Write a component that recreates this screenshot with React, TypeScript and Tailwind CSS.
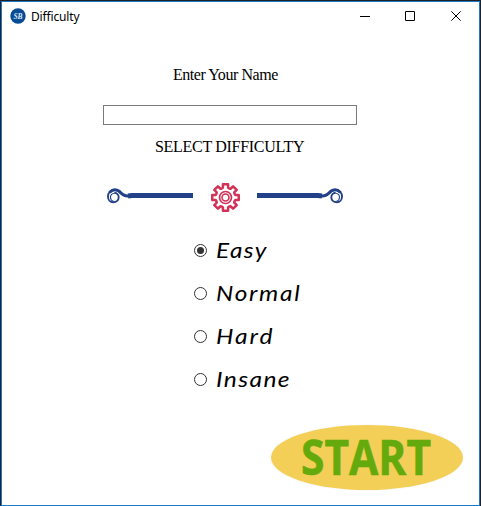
import { useState } from 'react';

const levels = [
  { name: 'Easy', look: 'tracking-[1.2px] scale-x-[1.16]' },
  { name: 'Normal', look: 'tracking-[1.5px] scale-x-[1.16]' },
  { name: 'Hard', look: 'tracking-[1.7px] scale-x-[1.17]' },
  { name: 'Insane', look: 'tracking-[1.2px] scale-x-[1.17]' },
];

function TitleBar() {
  return (
    <header className="mb-px flex h-7 items-center pl-2">
      <svg width="16" height="16" viewBox="0 0 16 16">
        <circle cx="8" cy="8" r="7.7" fill="#064b93" />
        <text x="8" y="10.6" textAnchor="middle" fontFamily="Liberation Serif, serif" fontSize="7.5" fontWeight="700" fontStyle="italic" fill="#dbe9f7">SB</text>
      </svg>
      <h1 className="mt-0.5 ml-[5px] grow font-['Noto_Sans',sans-serif] text-[12px] leading-4 tracking-[-0.15px]">Difficulty</h1>
      <div className="flex">
        {['M1 5.5H11', 'M.5 .5H9.5V9.5H.5Z', 'M.3 .3L9.7 9.7M9.7 .3L.3 9.7'].map((d) => (
          <button key={d} className="flex h-7 w-[46px] items-center justify-center">
            <svg width="10" height="10" viewBox="0 0 10 10" fill="none" stroke="#000" className="overflow-visible">
              <path d={d} />
            </svg>
          </button>
        ))}
      </div>
    </header>
  );
}

function Divider() {
  const cog: string[] = [];
  for (let i = 0; i < 8; i++) {
    const pts = [[-22.5, 9.8], [-15, 10.1], [-11, 13.5], [11, 13.5], [15, 10.1]];
    pts.forEach(([a, r]) => {
      const t = ((i * 45 + a) * Math.PI) / 180;
      cog.push(`${(r * Math.sin(t)).toFixed(2)},${(-r * Math.cos(t)).toFixed(2)}`);
    });
  }
  const scroll = (
    <g fill="none" stroke="#234189">
      <path d="M87 12.5H26L22 13" strokeWidth="5" />
      <path d="M28 13H20C15 13 14.5 7 9 7C4.5 7 2 10 2 13.5C2 16.8 4.2 19.3 7.2 19.3C10.4 19.3 12.7 17 12.7 14.3C12.7 12 10.8 10 8.3 9.8" strokeWidth="1.9" />
      <path d="M3.5 9.5Q8 4.8 13.3 8.3Q17 12.8 21 13H28" strokeWidth="3" />
      <path d="M8.5 10.3C5.8 10.4 4.3 12.3 4.5 14.5C4.6 16.5 6 18 7.5 18.4" strokeWidth="1.1" />
    </g>
  );
  return (
    <svg width="238" height="30" viewBox="0 0 238 30" className="mt-[27px] ml-[104px]">
      {scroll}
      <g transform="translate(238 0) scale(-1 1)">{scroll}</g>
      <g transform="translate(119.5 14.5)" fill="none" stroke="#d33157">
        <polygon points={cog.join(' ')} strokeWidth="2.5" strokeLinejoin="round" />
        <circle r="6" strokeWidth="1.7" />
        <circle r="3.5" strokeWidth="1.6" />
      </g>
    </svg>
  );
}

export default function App() {
  const [level, setLevel] = useState('Easy');
  return (
    <div className="h-[506px] w-[481px] border-x border-t border-[#202027] bg-white text-black">
      <main className="flex h-[505px] flex-col border border-[#1979ca]">
        <TitleBar />
        <label htmlFor="player" className="mt-[35px] ml-[171px] font-['Liberation_Serif',serif] text-[16px] leading-[18px] whitespace-nowrap tracking-[-0.45px]">Enter Your Name</label>
        <input id="player" className="mt-[21px] ml-[101px] h-5 w-[254px] shrink-0 border border-[#7a7a7a] px-1 text-sm outline-none" />
        <h2 className="mt-[13px] ml-[153px] font-['Liberation_Serif',serif] text-[16px] leading-[18px] whitespace-nowrap tracking-[-0.3px]">SELECT DIFFICULTY</h2>
        <Divider />
        <div className="mt-4 ml-[192px] flex flex-col">
          {levels.map(({ name, look }) => (
            <label key={name} className="flex h-[43px] items-center">
              <input type="radio" name="level" className="peer sr-only" checked={level === name} onChange={() => setLevel(name)} />
              <span className="flex size-[13px] items-center justify-center rounded-full border border-[#333] peer-checked:[&>i]:bg-[#333]">
                <i className="size-[7px] rounded-full" />
              </span>
              <span className={`mb-0.5 ml-[9px] origin-left font-['Lato',sans-serif] text-[21px] leading-7 italic ${look}`}>{name}</span>
            </label>
          ))}
        </div>
        <button className="mt-[22px] ml-[266px] h-[68px] w-[200px]">
          <svg width="200" height="68" viewBox="0 0 200 68">
            <ellipse cx="99" cy="34.5" rx="98" ry="33.5" fill="#fbfbfb" />
            <ellipse cx="99" cy="34.5" rx="96" ry="32.5" fill="#f3cf58" />
            <text x="33" y="52" textLength="130" lengthAdjust="spacingAndGlyphs" fontFamily="Open Sans, sans-serif" fontWeight="700" fontSize="48" fill="#65aa0c" stroke="#65aa0c" strokeWidth=".6">START</text>
          </svg>
        </button>
      </main>
    </div>
  );
}
